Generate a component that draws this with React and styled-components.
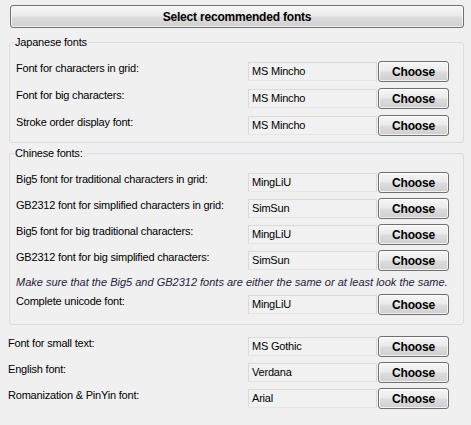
import React from 'react';
import styled, { createGlobalStyle } from 'styled-components';

const GlobalStyle = createGlobalStyle`
  html, body {
    margin: 0;
    padding: 0;
    background: #f0f0f0;
  }
  body {
    font-family: "Liberation Sans", Arial, sans-serif;
    font-size: 11px;
    color: #000;
  }
`;

const Page = styled.div`
  width: 471px;
  height: 425px;
  box-sizing: border-box;
  padding: 5px 0 0 8px;
  display: flex;
  flex-direction: column;
`;

const WinButton = styled.button`
  box-sizing: border-box;
  height: ${p => p.$height || 21}px;
  width: ${p => p.$width || 71}px;
  margin: 0;
  padding: 0;
  border: 1px solid #707070;
  border-radius: 3px;
  background: linear-gradient(to bottom, #f6f6f6 0%, #ebebeb 45%, #dcdcdc 55%, #cfcfcf 100%);
  box-shadow: inset 0 0 0 1px rgba(255, 255, 255, 0.7);
  font-family: "Liberation Sans", Arial, sans-serif;
  font-weight: bold;
  font-size: 12px;
  letter-spacing: -0.2px;
  color: #000;
  display: flex;
  align-items: center;
  justify-content: center;
  cursor: default;
`;

const TitleButton = styled(WinButton)`
  margin-left: 2px;
`;

const Group = styled.fieldset`
  box-sizing: border-box;
  width: 455px;
  margin: ${p => p.$top || 0}px 0 0 1px;
  padding: 12px 15px ${p => p.$bottom || 6}px 6px;
  border: 1px solid #d5dfe5;
  border-radius: 3px;
  min-width: 0;
  display: flex;
  flex-direction: column;
  gap: ${p => p.$gap || 6}px;
`;

const Legend = styled.legend`
  padding: 0 1px;
  margin-left: -2px;
  line-height: 13px;
  font-size: 11px;
  letter-spacing: -0.2px;
`;

const Row = styled.div`
  display: grid;
  grid-template-columns: ${p => p.$label || 232}px 128px 71px;
  column-gap: 1px;
  height: 21px;
  align-items: center;
`;

const Label = styled.span`
  align-self: start;
  line-height: 13px;
  padding-top: 1px;
  letter-spacing: -0.2px;
  white-space: nowrap;
`;

const FontBox = styled.div`
  box-sizing: border-box;
  height: 19px;
  margin-left: -1px;
  width: 129px;
  padding: 1px 3px;
  border: 1px solid #dadada;
  border-bottom-color: #e6e6e6;
  background: #f1f1f1;
  line-height: 14px;
  letter-spacing: -0.2px;
  white-space: nowrap;
  overflow: hidden;
`;

const Note = styled.div`
  font-style: italic;
  color: #1f2240;
  line-height: 13px;
  height: 13px;
  letter-spacing: 0;
  white-space: nowrap;
`;

const Loose = styled.div`
  margin-top: ${p => p.$top || 0}px;
  display: flex;
  flex-direction: column;
  gap: 5px;
`;

function FontRow({ label, value, labelWidth }) {
  return (
    <Row $label={labelWidth}>
      <Label>{label}</Label>
      <FontBox>{value}</FontBox>
      <WinButton>Choose</WinButton>
    </Row>
  );
}

export default function App() {
  return (
    <>
      <GlobalStyle />
      <Page>
        <TitleButton $width={454} $height={23}>Select recommended fonts</TitleButton>

        <Group $top={8} $gap={6} $bottom={6}>
          <Legend>Japanese fonts</Legend>
          <FontRow label="Font for characters in grid:" value="MS Mincho" />
          <FontRow label="Font for big characters:" value="MS Mincho" />
          <FontRow label="Stroke order display font:" value="MS Mincho" />
        </Group>

        <Group $top={4} $gap={5} $bottom={9}>
          <Legend>Chinese fonts:</Legend>
          <FontRow label="Big5 font for traditional characters in grid:" value="MingLiU" />
          <FontRow label="GB2312 font for simplified characters in grid:" value="SimSun" />
          <FontRow label="Big5 font for big traditional characters:" value="MingLiU" />
          <FontRow label="GB2312 font for big simplified characters:" value="SimSun" />
          <Note>Make sure that the Big5 and GB2312 fonts are either the same or at least look the same.</Note>
          <FontRow label="Complete unicode font:" value="MingLiU" />
        </Group>

        <Loose $top={11}>
          <FontRow labelWidth={240} label="Font for small text:" value="MS Gothic" />
          <FontRow labelWidth={240} label="English font:" value="Verdana" />
          <FontRow labelWidth={240} label="Romanization & PinYin font:" value="Arial" />
        </Loose>
      </Page>
    </>
  );
}
